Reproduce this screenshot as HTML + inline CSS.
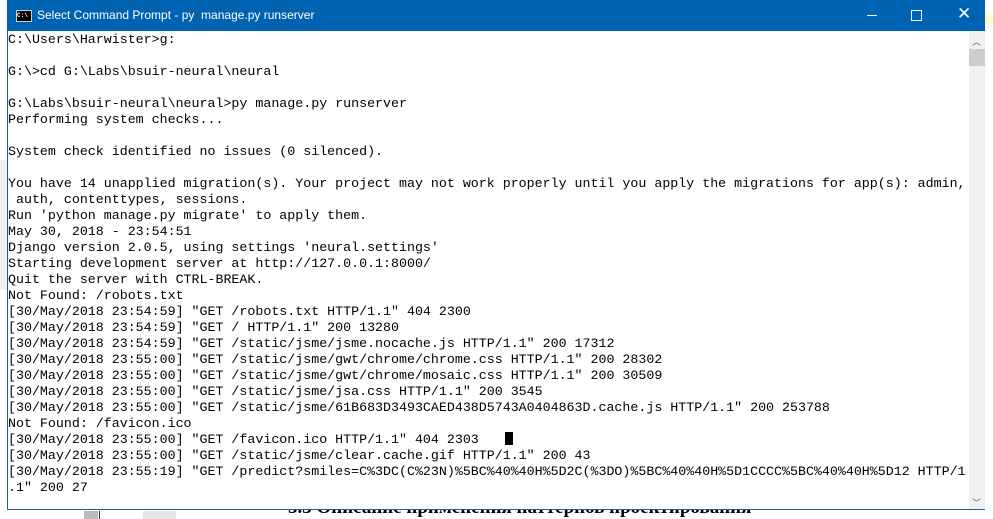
<!DOCTYPE html>
<html><head><meta charset="utf-8"><style>
body{margin:0;width:993px;height:519px;position:relative;overflow:hidden;background:#fff;font-family:"Liberation Sans",sans-serif}
.win{position:absolute;left:7px;top:0;width:978px;height:510px;border:1px solid #1a5fa8;border-top:none;box-sizing:border-box;background:#fff}
.tb{position:absolute;left:7px;top:0;width:978px;height:31px;background:#0063b1;color:#fff;font-size:12px}
.tb .t{position:absolute;left:30px;top:8px}
.ico{position:absolute;left:9px;top:10px;width:14px;height:10px;background:#000;border:1px solid #ccc;font:bold 6px "Liberation Mono",monospace;color:#fff;line-height:10px}
pre{position:absolute;left:8px;top:32px;margin:0;font:13.3px/16px "Liberation Mono","DejaVu Sans Mono",monospace;color:#000;letter-spacing:0}
.sb{position:absolute;left:969px;top:31px;width:16px;height:478px;background:#f0f0f0}
.th{position:absolute;left:969px;top:49px;width:16px;height:17px;background:#cdcdcd}
.cur{position:absolute;left:505px;top:432px;width:8px;height:13px;background:#000}
</style></head><body>
<div style="position:absolute;left:985px;top:0;width:8px;height:519px;background:#fff"></div>
<div style="position:absolute;left:985px;top:14px;width:8px;height:10px;background:#fffbd0"></div>
<div style="position:absolute;left:0;top:160px;width:7px;height:130px;background:#f0f0f0"></div>
<div class="win"></div>
<div class="tb"><div class="ico">C:\</div><span class="t">Select Command Prompt - py&nbsp; manage.py runserver</span>
<span style="position:absolute;left:860px;top:15px;width:10px;height:1px;background:#fff"></span>
<span style="position:absolute;left:904px;top:10px;width:9px;height:9px;border:1px solid #fff"></span>
<span style="position:absolute;left:950px;top:4px;font-size:17px">✕</span></div>
<div class="sb"></div><div class="th"></div>
<div style="position:absolute;left:972px;top:35px;font-size:9px;color:#555">︿</div>
<div style="position:absolute;left:972px;top:496px;font-size:9px;color:#555">﹀</div>
<pre>C:\Users\Harwister&gt;g:

G:\&gt;cd G:\Labs\bsuir-neural\neural

G:\Labs\bsuir-neural\neural&gt;py manage.py runserver
Performing system checks...

System check identified no issues (0 silenced).

You have 14 unapplied migration(s). Your project may not work properly until you apply the migrations for app(s): admin,
 auth, contenttypes, sessions.
Run 'python manage.py migrate' to apply them.
May 30, 2018 - 23:54:51
Django version 2.0.5, using settings 'neural.settings'
Starting development server at http://127.0.0.1:8000/
Quit the server with CTRL-BREAK.
Not Found: /robots.txt
[30/May/2018 23:54:59] "GET /robots.txt HTTP/1.1" 404 2300
[30/May/2018 23:54:59] "GET / HTTP/1.1" 200 13280
[30/May/2018 23:54:59] "GET /static/jsme/jsme.nocache.js HTTP/1.1" 200 17312
[30/May/2018 23:55:00] "GET /static/jsme/gwt/chrome/chrome.css HTTP/1.1" 200 28302
[30/May/2018 23:55:00] "GET /static/jsme/gwt/chrome/mosaic.css HTTP/1.1" 200 30509
[30/May/2018 23:55:00] "GET /static/jsme/jsa.css HTTP/1.1" 200 3545
[30/May/2018 23:55:00] "GET /static/jsme/61B683D3493CAED438D5743A0404863D.cache.js HTTP/1.1" 200 253788
Not Found: /favicon.ico
[30/May/2018 23:55:00] "GET /favicon.ico HTTP/1.1" 404 2303
[30/May/2018 23:55:00] "GET /static/jsme/clear.cache.gif HTTP/1.1" 200 43
[30/May/2018 23:55:19] "GET /predict?smiles=C%3DC(C%23N)%5BC%40%40H%5D2C(%3DO)%5BC%40%40H%5D1CCCC%5BC%40%40H%5D12 HTTP/1
.1" 200 27</pre>
<div class="cur"></div>
<div style="position:absolute;left:84px;top:511px;width:14px;height:8px;background:#bbb"></div>
<div style="position:absolute;left:99px;top:511px;width:1px;height:8px;background:#333"></div>
<div style="position:absolute;left:143px;top:511px;width:33px;height:8px;background:#e6e6e6"></div>
<div style="position:absolute;left:288px;top:497px;font:bold 19px 'Liberation Serif','Noto Serif CJK SC',serif;color:#000;clip-path:inset(13px 0 0 0);white-space:nowrap">5.3 Описание применения паттернов проектирования</div>
</body></html>
